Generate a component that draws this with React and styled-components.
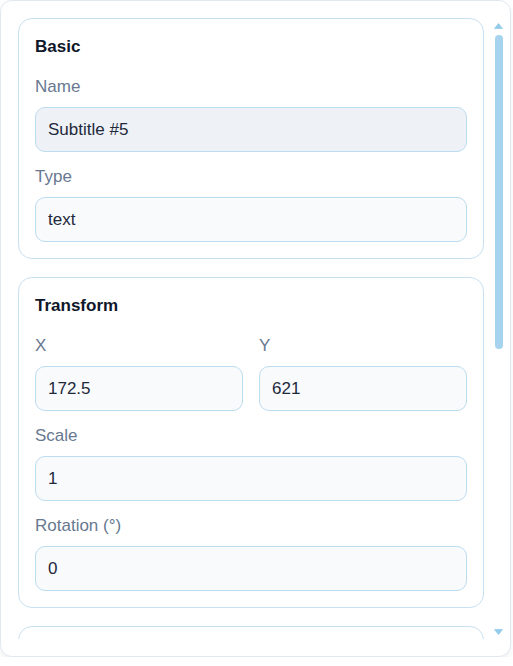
import React from "react";
import styled, { createGlobalStyle } from "styled-components";

const Global = createGlobalStyle`
  html, body { margin: 0; padding: 0; background: #ffffff; }
  body { font-family: "Liberation Sans", Arial, sans-serif; }
  * { box-sizing: border-box; }
`;

const Panel = styled.div`
  width: 511px;
  height: 657px;
  background: #ffffff;
  border: 1px solid #e2e8f0;
  border-radius: 12px;
  box-shadow: 0 3px 6px rgba(15, 23, 42, 0.06);
  padding: 17px 4px 17px 17px;
  display: flex;
  flex-direction: row;
`;

const Scroller = styled.div`
  flex: 1;
  min-width: 0;
  overflow: hidden;
  padding-right: 7px;
  display: flex;
  flex-direction: column;
  gap: 18px;
`;

const ScrollBar = styled.div`
  width: 15px;
  flex-shrink: 0;
  display: flex;
  flex-direction: column;
`;

const ArrowBtn = styled.div`
  height: 15px;
  flex-shrink: 0;
  display: flex;
  align-items: center;
  justify-content: center;
`;

const Track = styled.div`
  flex: 1;
  padding: 2px 3px;
`;

const Thumb = styled.div`
  height: 314px;
  width: 8px;
  margin: 0 auto;
  border-radius: 4px;
  background: #a6d4ee;
`;

const Card = styled.section`
  flex-shrink: 0;
  border: 1px solid #c6e1f1;
  border-radius: 14px;
  padding: 16px;
  background: #ffffff;
  display: flex;
  flex-direction: column;
  gap: 15px;
`;

const Title = styled.h3`
  margin: 0 0 3px;
  font-size: 17px;
  line-height: 24px;
  font-weight: 700;
  color: #0f172a;
`;

const Row = styled.div`
  display: grid;
  grid-template-columns: repeat(${(p) => p.$cols || 1}, 1fr);
  gap: 16px;
`;

const Field = styled.label`
  display: flex;
  flex-direction: column;
  gap: 10px;
`;

const Label = styled.span`
  font-size: 17px;
  line-height: 20px;
  color: #687890;
`;

const Input = styled.input`
  height: 45px;
  width: 100%;
  border: 1px solid #bcdcf0;
  border-radius: 10px;
  background: ${(p) => (p.$active ? "#eef2f7" : "#f8fafc")};
  padding: 0 12px;
  font-family: "Liberation Sans", Arial, sans-serif;
  font-size: 17px;
  color: #1e293b;
  outline: none;
`;

const Area = styled.textarea`
  height: 90px;
  width: 100%;
  border: 1px solid #bcdcf0;
  border-radius: 10px;
  background: #f8fafc;
  padding: 12px;
  font-family: "Liberation Sans", Arial, sans-serif;
  font-size: 17px;
  color: #1e293b;
  outline: none;
  resize: none;
`;

function F({ label, value, active }) {
  return (
    <Field>
      <Label>{label}</Label>
      <Input defaultValue={value} $active={active} readOnly />
    </Field>
  );
}

function Arrow({ down }) {
  return (
    <svg width="9" height="6" viewBox="0 0 9 6">
      <path
        d={down ? "M0.5 0.5 L8.5 0.5 L4.5 5.5 Z" : "M0.5 5.5 L8.5 5.5 L4.5 0.5 Z"}
        fill="#94cbea"
        stroke="#94cbea"
        strokeWidth="0.8"
        strokeLinejoin="round"
      />
    </svg>
  );
}

export default function App() {
  return (
    <>
      <Global />
      <Panel>
        <Scroller>
          <Card>
            <Title>Basic</Title>
            <F label="Name" value="Subtitle #5" active />
            <F label="Type" value="text" />
          </Card>
          <Card>
            <Title>Transform</Title>
            <Row $cols={2}>
              <F label="X" value="172.5" />
              <F label="Y" value="621" />
            </Row>
            <F label="Scale" value="1" />
            <F label="Rotation (°)" value="0" />
          </Card>
          <Card>
            <Title>Style</Title>
            <F label="Font size" value="32" />
            <F label="Color" value="#ffffff" />
            <F label="Opacity" value="1" />
          </Card>
          <Card>
            <Title>Content</Title>
            <Field>
              <Label>Text</Label>
              <Area defaultValue="Subtitle #5" readOnly />
            </Field>
          </Card>
        </Scroller>
        <ScrollBar>
          <ArrowBtn>
            <Arrow />
          </ArrowBtn>
          <Track>
            <Thumb />
          </Track>
          <ArrowBtn>
            <Arrow down />
          </ArrowBtn>
        </ScrollBar>
      </Panel>
    </>
  );
}
